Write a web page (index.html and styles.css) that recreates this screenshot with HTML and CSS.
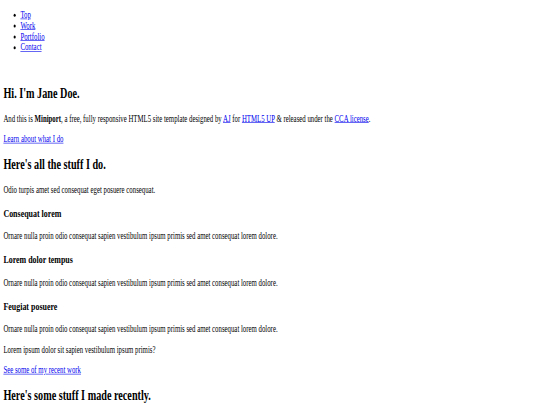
FILE: index.html
```
<!DOCTYPE html>
<html>
<head>
<meta charset="utf-8">
<link rel="stylesheet" href="styles.css">
</head>
<body>
<div class="page">
  <nav class="nav">
    <ul>
      <li><a href="#top">Top</a></li>
      <li><a href="#work">Work</a></li>
      <li><a href="#portfolio">Portfolio</a></li>
      <li><a href="#contact">Contact</a></li>
    </ul>
  </nav>
  <article class="wrapper">
    <div class="intro-image"></div>
    <header><h1>Hi. I'm <strong>Jane Doe</strong>.</h1></header>
    <p>And this is <strong>Miniport</strong>, a free, fully responsive HTML5 site template designed by <a href="#">AJ</a> for <a href="#">HTML5 UP</a> &amp; released under the <a href="#">CCA license</a>.</p>
    <a href="#work">Learn about what I do</a>
  </article>
  <article class="wrapper">
    <header>
      <h2>Here's all the stuff I do.</h2>
      <p>Odio turpis amet sed consequat eget posuere consequat.</p>
    </header>
    <section><h3>Consequat lorem</h3><p>Ornare nulla proin odio consequat sapien vestibulum ipsum primis sed amet consequat lorem dolore.</p></section>
    <section><h3>Lorem dolor tempus</h3><p>Ornare nulla proin odio consequat sapien vestibulum ipsum primis sed amet consequat lorem dolore.</p></section>
    <section><h3>Feugiat posuere</h3><p>Ornare nulla proin odio consequat sapien vestibulum ipsum primis sed amet consequat lorem dolore.</p></section>
    <footer>
      <p>Lorem ipsum dolor sit sapien vestibulum ipsum primis?</p>
      <a href="#portfolio">See some of my recent work</a>
    </footer>
  </article>
  <article class="wrapper">
    <header><h2>Here's some stuff I made recently.</h2></header>
  </article>
</div>
</body>
</html>
```
FILE: styles.css
```
html, body {
  margin: 0;
  padding: 0;
  background: #ffffff;
  overflow: hidden;
}
.page {
  width: 1270px;
  padding: 16px 8px 0;
  font-family: "Liberation Serif", "Times New Roman", serif;
  font-size: 16px;
  color: #000000;
  transform: scale(0.425, 0.6);
  transform-origin: 0 0;
}
.nav ul {
  margin: 0 0 16px;
  padding-left: 40px;
}
.intro-image {
  height: 18px;
}
a {
  color: #0000ee;
}
h1 {
  font-size: 24px;
  margin: 19.92px 0;
}
h2 {
  font-size: 24px;
  margin: 19.92px 0;
}
h3 {
  font-size: 18.72px;
  margin: 18.72px 0;
}
p {
  margin: 16px 0;
}
```
